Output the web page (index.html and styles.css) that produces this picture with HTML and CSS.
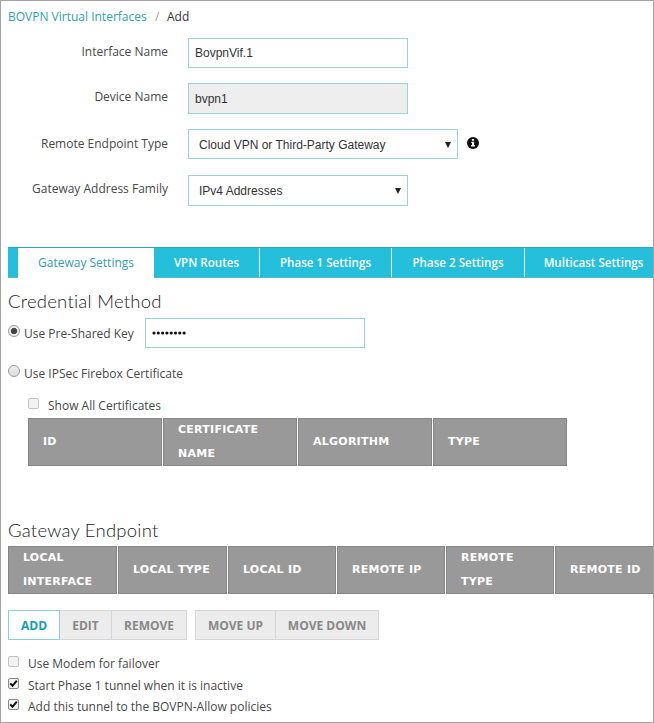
FILE: index.html
```
<!DOCTYPE html>
<html lang="en">
<head>
<meta charset="utf-8">
<title>BOVPN Virtual Interfaces</title>
<link rel="stylesheet" href="styles.css">
</head>
<body>
<main class="page">
  <nav class="crumbs"><a>BOVPN Virtual Interfaces</a><span class="slash">/</span><span class="here">Add</span></nav>
  <section class="form">
    <div class="row"><label>Interface Name</label><div class="field">BovpnVif.1</div></div>
    <div class="row r2"><label>Device Name</label><div class="field disabled">bvpn1</div></div>
    <div class="row r3"><label>Remote Endpoint Type</label><div class="field select wide"><span>Cloud VPN or Third-Party Gateway</span><i class="arrow"></i></div>
      <svg class="info" viewBox="0 0 12 12"><circle cx="6" cy="6" r="6" fill="#111"/><path d="M4.9 2h2.2v1.7H4.9zM4.3 4.7h2.8v3.4h.8v1.3H4.1V8.1H5V6h-.7z" fill="#fff"/></svg></div>
    <div class="row r4"><label>Gateway Address Family</label><div class="field select"><span>IPv4 Addresses</span><i class="arrow"></i></div></div>
  </section>
  <nav class="tabs">
    <span class="tab active">Gateway Settings</span>
    <span class="tab t2">VPN Routes</span>
    <span class="tab t3">Phase 1 Settings</span>
    <span class="tab t4">Phase 2 Settings</span>
    <span class="tab t5">Multicast Settings</span>
  </nav>
  <h2 class="h-cred">Credential Method</h2>
  <div class="psk"><i class="radio on"></i><span class="psk-label">Use Pre-Shared Key</span>
    <div class="field key"><svg viewBox="0 0 36 6"><g fill="#111"><circle cx="2" cy="3" r="1.6"/><circle cx="6.3" cy="3" r="1.6"/><circle cx="10.6" cy="3" r="1.6"/><circle cx="14.9" cy="3" r="1.6"/><circle cx="19.2" cy="3" r="1.6"/><circle cx="23.5" cy="3" r="1.6"/><circle cx="27.8" cy="3" r="1.6"/><circle cx="32.1" cy="3" r="1.6"/></g></svg></div></div>
  <div class="cert"><i class="radio"></i><span class="cert-label">Use IPSec Firebox Certificate</span></div>
  <div class="showall"><i class="box off"></i><span class="show-label">Show All Certificates</span></div>
  <div class="grid certs"><div><span>ID</span></div><div><span>CERTIFICATE<br>NAME</span></div><div><span>ALGORITHM</span></div><div><span>TYPE</span></div></div>
  <h2 class="h-end">Gateway Endpoint</h2>
  <div class="grid ends"><div><span>LOCAL<br>INTERFACE</span></div><div><span>LOCAL TYPE</span></div><div><span>LOCAL ID</span></div><div><span>REMOTE IP</span></div><div><span>REMOTE<br>TYPE</span></div><div><span>REMOTE ID</span></div></div>
  <div class="buttons">
    <span class="btn add">ADD</span><span class="btn edit">EDIT</span><span class="btn remove">REMOVE</span><span class="btn up">MOVE UP</span><span class="btn down">MOVE DOWN</span>
  </div>
  <div class="check k1"><i class="box off"></i><span>Use Modem for failover</span></div>
  <div class="check"><i class="box"><svg viewBox="0 0 9 9"><path d="M1.2 4.4L3.5 6.8L7.8 1.6" fill="none" stroke="#111" stroke-width="2"/></svg></i><span>Start Phase 1 tunnel when it is inactive</span></div>
  <div class="check"><i class="box"><svg viewBox="0 0 9 9"><path d="M1.2 4.4L3.5 6.8L7.8 1.6" fill="none" stroke="#111" stroke-width="2"/></svg></i><span>Add this tunnel to the BOVPN-Allow policies</span></div>
</main>
</body>
</html>
```
FILE: styles.css
```
* { box-sizing: border-box; }
body { margin: 0; background: #fff; color: #484848; font: 12px/20px "Open Sans", sans-serif; }
.page { width: 654px; height: 723px; border: 1px solid #a3a3a3; padding-left: 7px; overflow: hidden; white-space: nowrap; }
.crumbs { height: 37px; padding-top: 6px; display: flex; }
.crumbs a { color: #2f9fae; width: 139px; }
.slash { color: #999; width: 20px; padding-left: 8px; }
.here { color: #333; }
.row { display: flex; height: 30px; }
.row label { width: 160px; text-align: right; padding-top: 4px; }
.r2 { margin-top: 15px; height: 31px; }
.r3 { margin-top: 15px; }
.r3 label { padding-top: 5px; }
.r4 { margin-top: 16px; height: 31px; }
.field { width: 220px; margin-left: 20px; border: 1px solid #9ed3d6; padding-left: 6px; display: flex; align-items: center; color: #333; font: 12px/16px "Liberation Sans", sans-serif; background: #fff; }
.disabled { background: #eee; }
.select { padding: 0 6px 0 10px; justify-content: space-between; }
.r3 .select { padding-top: 1px; }
.wide { width: 270px; }
.arrow { border: 3px solid transparent; border-top: 6px solid #222; border-bottom: 0; }
.info { width: 12px; height: 12px; margin: 8px 0 0 9px; }
.tabs { display: flex; height: 31px; margin-top: 41px; padding-left: 10px; background: #24bfdb; border-top: 1px solid #2ba9bb; border-bottom: 1px solid #5ab9c8; line-height: 29px; color: #fff; font-weight: 600; font-size: 11.6px; }
.tab { border-left: 1px solid #e9fafd; text-align: center; flex: none; }
.active { width: 136px; background: #fff; color: #359dac; font-weight: 400; font-size: 12px; line-height: 30px; margin-bottom: -1px; border: 0; }
.t2 { width: 105px; border: 0; }
.t3 { width: 132px; }
.t4 { width: 133px; }
.t5 { width: 138px; }
h2 { font: 300 18.5px/24px Lato, sans-serif; letter-spacing: .24px; color: #222; margin: 0; }
.h-cred { margin-top: 11px; height: 29px; }
.psk { display: flex; height: 30px; }
.radio { width: 12px; height: 12px; border: 1px solid #999; border-radius: 50%; background: linear-gradient(#eee, #ddd); margin-top: 7px; flex: none; }
.radio.on { background: radial-gradient(circle, #444 0 2.8px, #eee 3.6px); }
.psk-label { width: 125px; padding: 6px 0 0 4px; flex: none; }
.key { margin-left: 0; }
.key svg { width: 36px; height: 6px; }
.cert { display: flex; margin-top: 10px; height: 36px; }
.cert-label { padding: 6px 0 0 4px; }
.showall { display: flex; padding: 4px 0 0 20px; height: 24px; }
.box { width: 11px; height: 11px; border: 1px solid #888; border-radius: 2px; background: #f2f2f2; display: flex; flex: none; }
.box.off { border-color: #c4c4c4; }
.box svg { width: 9px; height: 9px; }
.show-label { margin: -2px 0 0 9px; }
.grid { display: grid; height: 48px; grid-template-rows: 48px; gap: 1px; color: #fff; font: 700 11px/24px "DejaVu Sans", sans-serif; letter-spacing: .25px; }
.grid div { background: #999; border: 1px solid #858585; padding-left: 14px; display: flex; align-items: center; height: 48px; min-width: 0; }
.certs { width: 539px; margin-left: 20px; grid-template-columns: 134px 134px 134px 134px; }
.h-end { margin-top: 52px; height: 28px; }
.ends { grid-template-columns: 109px 109px 108px 108px 108px 110px; }
.buttons { display: flex; margin-top: 16px; height: 30px; font-weight: 700; color: #888; }
.btn { text-align: center; line-height: 29px; border: 1px solid #d6d6d6; background: #ececec; }
.add { width: 52px; background: #fff; border-color: #8fd0d8; color: #149fae; }
.edit { width: 52px; border-left: 0; }
.remove { width: 75px; border-left: 0; }
.up { width: 81px; margin-left: 8px; }
.down { width: 103px; border-left: 0; }
.check { display: flex; height: 21px; }
.check span { margin: -2px 0 0 9px; }
.k1 { margin-top: 16px; height: 22px; }
```
